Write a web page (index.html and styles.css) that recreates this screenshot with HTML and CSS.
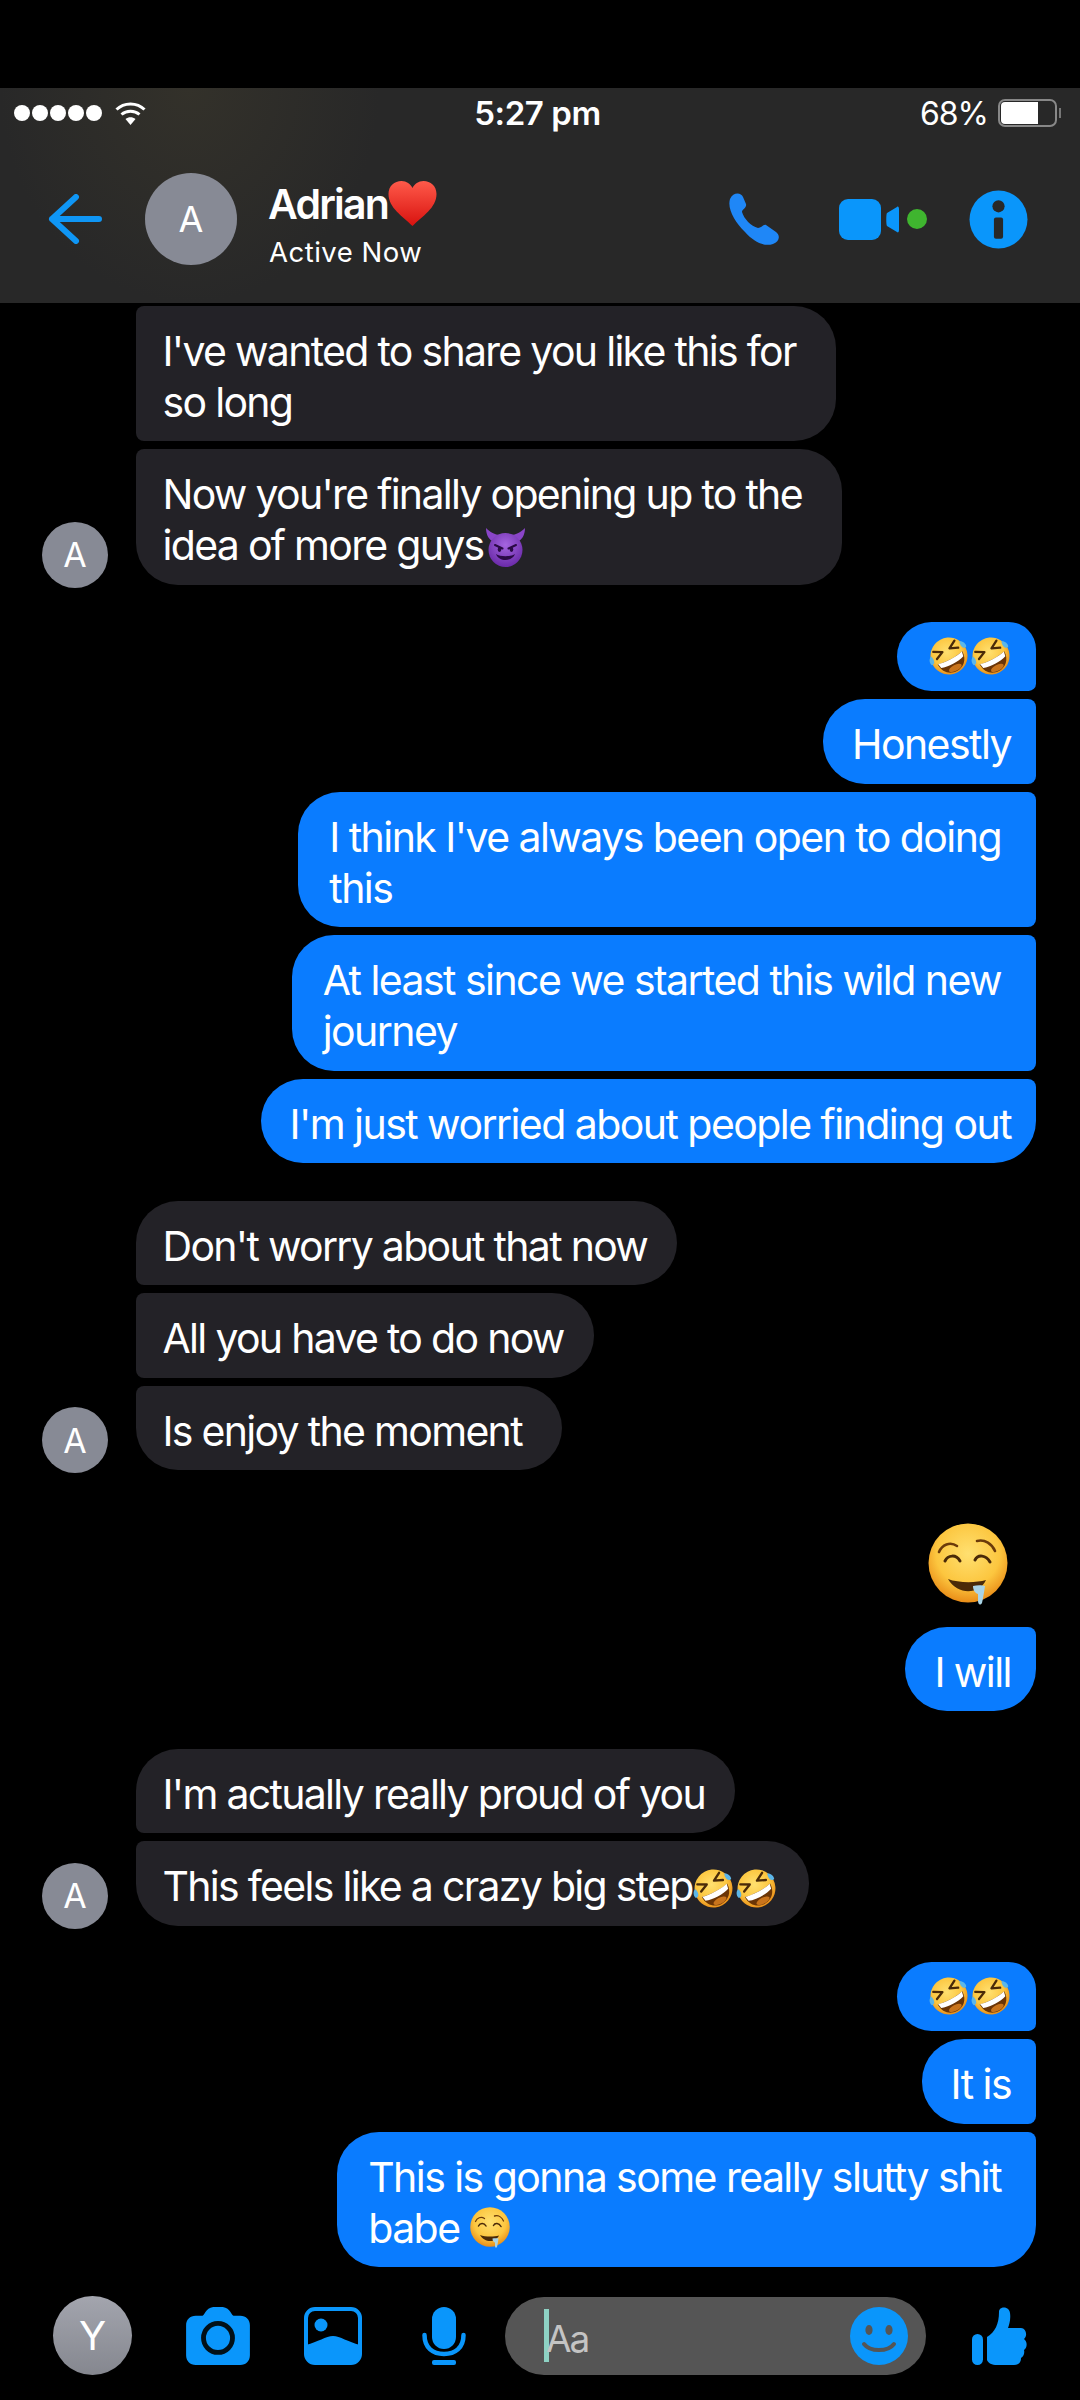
FILE: index.html
```html
<!DOCTYPE html>
<html lang="en">
<head>
    <meta charset="UTF-8">
    <meta name="viewport" content="width=device-width, initial-scale=1.0">
    <title>Adrian - Messages</title>
    <link rel="stylesheet" href="styles.css">
</head>
<body>

    <!-- shared emoji drawings -->
    <svg class="defs" width="0" height="0">
        <defs>
            <radialGradient id="faceGrad" cx="50%" cy="38%" r="62%">
                <stop offset="0%" stop-color="#ffe070"/>
                <stop offset="65%" stop-color="#fcc63f"/>
                <stop offset="100%" stop-color="#e98d18"/>
            </radialGradient>
            <radialGradient id="devilGrad" cx="50%" cy="35%" r="65%">
                <stop offset="0%" stop-color="#a565e0"/>
                <stop offset="100%" stop-color="#6a2aa8"/>
            </radialGradient>
            <linearGradient id="heartGrad" x1="0" y1="0" x2="0" y2="1">
                <stop offset="0%" stop-color="#ff5a4a"/>
                <stop offset="100%" stop-color="#d8120f"/>
            </linearGradient>
            <symbol id="rofl" viewBox="0 0 40 40">
                <g transform="rotate(-28 20 20)">
                    <circle cx="20" cy="20" r="18.5" fill="url(#faceGrad)"/>
                    <path d="M6 22 C12 24 28 24 34 22 C34 32 27 37 20 37 C13 37 6 32 6 22 Z" fill="#6b3506"/>
                    <path d="M6.5 22 C12 24 28 24 33.5 22 L32.5 27 C26 29.5 14 29.5 7.5 27 Z" fill="#fff"/>
                    <ellipse cx="20" cy="33.5" rx="7" ry="3" fill="#c9741c"/>
                    <path d="M8 9 L16 13.5 L8 17" fill="none" stroke="#4a2a08" stroke-width="2.3" stroke-linecap="round" stroke-linejoin="round"/>
                    <path d="M32 9 L24 13.5 L32 17" fill="none" stroke="#4a2a08" stroke-width="2.3" stroke-linecap="round" stroke-linejoin="round"/>
                    <path d="M36 12 C39 13 41 17 39.5 20 C37 21 34 18 36 12 Z" fill="#5cb6e8"/>
                    <path d="M4 12 C1 13 -1 17 0.5 20 C3 21 6 18 4 12 Z" fill="#5cb6e8"/>
                </g>
            </symbol>
            <symbol id="devil" viewBox="0 0 43 42">
                <path d="M2 2 C2 9 5 14 10 16 L16 9 C11 9 6 6 2 2 Z M41 2 C41 9 38 14 33 16 L27 9 C32 9 37 6 41 2 Z" fill="#8a45c8"/>
                <circle cx="21.5" cy="24" r="17" fill="url(#devilGrad)"/>
                <path d="M11 19 L18.5 22.5 M32 19 L24.5 22.5" stroke="#2a0a45" stroke-width="2" stroke-linecap="round"/>
                <ellipse cx="15.5" cy="23.5" rx="1.8" ry="2.4" fill="#2a0a45"/>
                <ellipse cx="27.5" cy="23.5" rx="1.8" ry="2.4" fill="#2a0a45"/>
                <path d="M12 28 C15 36 28 36 31 28 C27 31 16 31 12 28 Z" fill="#2a0a45"/>
            </symbol>
            <symbol id="drool" viewBox="0 0 80 84">
                <circle cx="40" cy="40" r="39.5" fill="url(#faceGrad)"/>
                <path d="M11 29 C14 22 22 18 29 23 M49 18 C57 16 64 21 67 28" fill="none" stroke="#6b3a0a" stroke-width="2.6" stroke-linecap="round"/>
                <path d="M17 38 C20 32 28 31 32 38 M47 37 C50 31 58 32 62 39" fill="none" stroke="#4a2a08" stroke-width="3" stroke-linecap="round"/>
                <path d="M20 56 C30 60 48 60 58 57 C52 71 30 73 20 56 Z" fill="#4a2a08"/>
                <path d="M45 63 C49 62 54 62 57 63 C56 69 55 76 54 80 C52 83 50 81 50 78 L50 71 C47 70 45 67 45 63 Z" fill="#a9d4e6"/>
            </symbol>
        </defs>
    </svg>

    <header class="top-bar">
        <div class="status-row">
            <div class="status-left">
                <span class="signal"><i></i><i></i><i></i><i></i><i></i></span>
                <svg class="wifi" viewBox="0 0 31 24">
                    <path d="M1.5 8.5 C9 1 22 1 29.5 8.5" fill="none" stroke="#fff" stroke-width="3"/>
                    <path d="M6.5 13.5 C11.5 9 19.5 9 24.5 13.5" fill="none" stroke="#fff" stroke-width="3"/>
                    <path d="M10.5 18 C13.5 15.5 17.5 15.5 20.5 18 L15.5 24 Z" fill="#fff"/>
                </svg>
            </div>
            <div class="status-time">5:27 pm</div>
            <div class="status-right">
                <span>68%</span>
                <span class="battery"><span class="battery-fill"></span></span>
                <span class="battery-tip"></span>
            </div>
        </div>
        <div class="nav-row">
            <svg class="back" viewBox="0 0 54 50">
                <path d="M28 3 L4 25 L28 47 M4 25 L51 25" fill="none" stroke="#0f96f5" stroke-width="6" stroke-linecap="round" stroke-linejoin="round"/>
            </svg>
            <div class="nav-avatar">A</div>
            <div class="nav-title">
                <div class="nav-name">Adrian<svg class="heart" viewBox="0 0 48 46"><path d="M24 45 C14 35 0 27 0 13 C0 5 6 0 13 0 C18 0 22 3 24 7 C26 3 30 0 35 0 C42 0 48 5 48 13 C48 27 34 35 24 45 Z" fill="url(#heartGrad)"/></svg></div>
                <div class="nav-status">Active Now</div>
            </div>
            <div class="nav-actions">
                <svg class="phone" viewBox="0 0 54 54">
                    <path d="M3 7 C6 0 14 0 16 5 L19 12 C20 16 15 17 15 20 C17 27 24 34 31 36 C35 36 36 32 39 33 L49 40 C54 44 52 50 46 52 C37 55 27 50 18 40 C8 30 0 17 3 7 Z" fill="#1f87f7"/>
                </svg>
                <svg class="video" viewBox="0 0 88 41">
                    <rect x="0" y="0" width="42" height="41" rx="9" fill="#0a96fb"/>
                    <path d="M48 14 L58 8 C59 7 60 8 60 10 L60 31 C60 33 59 34 58 33 L48 27 C47 26 47 15 48 14 Z" fill="#0a96fb"/>
                    <circle cx="78" cy="20" r="10" fill="#3fb52f"/>
                </svg>
                <svg class="info" viewBox="0 0 58 58">
                    <circle cx="29" cy="29" r="28.5" fill="#0a96fb"/>
                    <circle cx="29" cy="16" r="6" fill="#282828"/>
                    <rect x="24.5" y="27" width="9" height="21" rx="2" fill="#282828"/>
                </svg>
            </div>
        </div>
    </header>

    <main class="chat">
        <!-- Adrian -->
        <section class="group in">
            <div class="avatar">A</div>
            <div class="stack">
                <div class="bubble wide clip-top">I've wanted to share you like this for<br>so long</div>
                <div class="bubble wide last">Now you're finally opening up to the<br>idea of more guys<svg class="emoji devil"><use href="#devil"/></svg></div>
            </div>
        </section>

        <!-- me -->
        <section class="group out">
            <div class="stack">
                <div class="bubble first emoji-bubble"><svg class="emoji"><use href="#rofl"/></svg><svg class="emoji"><use href="#rofl"/></svg></div>
                <div class="bubble mid">Honestly</div>
                <div class="bubble mid wide">I think I've always been open to doing<br>this</div>
                <div class="bubble mid wide">At least since we started this wild new<br>journey</div>
                <div class="bubble last">I'm just worried about people finding out</div>
            </div>
        </section>

        <section class="group in">
            <div class="avatar">A</div>
            <div class="stack">
                <div class="bubble first">Don't worry about that now</div>
                <div class="bubble mid">All you have to do now</div>
                <div class="bubble last wide">Is enjoy the moment</div>
            </div>
        </section>

        <section class="group out solo">
            <div class="stack">
                <svg class="big-emoji"><use href="#drool"/></svg>
                <div class="bubble last">I will</div>
            </div>
        </section>

        <section class="group in">
            <div class="avatar">A</div>
            <div class="stack">
                <div class="bubble first">I'm actually really proud of you</div>
                <div class="bubble last">This feels like a crazy big step<svg class="emoji"><use href="#rofl"/></svg><svg class="emoji"><use href="#rofl"/></svg></div>
            </div>
        </section>

        <section class="group out closing">
            <div class="stack">
                <div class="bubble first emoji-bubble"><svg class="emoji"><use href="#rofl"/></svg><svg class="emoji"><use href="#rofl"/></svg></div>
                <div class="bubble mid">It is</div>
                <div class="bubble last wide">This is gonna some really slutty shit<br>babe <svg class="emoji small"><use href="#drool"/></svg></div>
            </div>
        </section>
    </main>

    <footer class="composer">
        <div class="me-avatar">Y</div>
        <svg class="camera" viewBox="0 0 66 60">
            <path d="M10 9 L17 9 C19 9 20 1 28 0 L38 0 C46 1 47 9 49 9 L56 9 C62 9 66 13 66 19 L66 50 C66 56 62 60 56 60 L10 60 C4 60 0 56 0 50 L0 19 C0 13 4 9 10 9 Z" fill="#0a96fb"/>
            <circle cx="33" cy="32" r="15" fill="#0a96fb" stroke="#021018" stroke-width="5"/>
        </svg>
        <svg class="photo" viewBox="0 0 58 58">
            <rect x="2" y="2" width="54" height="54" rx="9" fill="none" stroke="#0a96fb" stroke-width="4"/>
            <path d="M2 38 C14 35 22 29 29 29 C36 29 44 35 56 38 L56 48 C56 53 53 56 48 56 L10 56 C5 56 2 53 2 48 Z" fill="#0a96fb"/>
            <circle cx="17" cy="18" r="6.5" fill="#0a96fb"/>
        </svg>
        <svg class="mic" viewBox="0 0 44 58">
            <rect x="10" y="0" width="24" height="42" rx="12" fill="#0a96fb"/>
            <path d="M2.5 28 C2.5 41 11 47 22 47 C33 47 41.5 41 41.5 28" fill="none" stroke="#0a96fb" stroke-width="4.5" stroke-linecap="round"/>
            <rect x="10" y="53" width="24" height="5" rx="2" fill="#0a96fb"/>
        </svg>
        <div class="input-box">
            <span class="caret"></span>
            <span class="placeholder">Aa</span>
            <svg class="smile" viewBox="0 0 58 58">
                <circle cx="29" cy="29" r="29" fill="#0a96fb"/>
                <ellipse cx="19" cy="23" rx="3.6" ry="5" fill="#555"/>
                <ellipse cx="39" cy="23" rx="3.6" ry="5" fill="#555"/>
                <path d="M14 37 C20 45 38 45 44 37" fill="none" stroke="#555" stroke-width="4" stroke-linecap="round"/>
            </svg>
        </div>
        <svg class="like" viewBox="0 0 56 58">
            <rect x="0" y="27" width="11" height="31" rx="5.5" fill="#0a96fb"/>
            <path d="M15 30 C23 25 27 17 27 5 C27 -1 37 -1 38 6 C39 13 37 18 36 21 L49 21 C54 21 56 29 52 32 C56 35 55 41 52 43 C53 47 51 50 49 51 C49 56 46 58 42 58 L25 58 C20 58 16 56 15 53 Z" fill="#0a96fb"/>
        </svg>
    </footer>

</body>
</html>
```

FILE: styles.css
```css
* {
    box-sizing: border-box;
}
html, body {
    margin: 0;
    padding: 0;
}
body {
    width: 1080px;
    height: 2400px;
    overflow: hidden;
    background: #000;
    color: #fff;
    font-family: Inter, "Liberation Sans", sans-serif;
    padding-top: 88px;
}
.defs {
    position: absolute;
}

/* header */
.top-bar {
    height: 215px;
    background: radial-gradient(ellipse 190px 215px at 190px 0, #33312a, #282828);
}
.status-row {
    height: 50px;
    display: grid;
    grid-template-columns: 1fr auto 1fr;
    align-items: center;
    padding: 0 19px 0 14px;
}
.status-left {
    display: flex;
    align-items: center;
    gap: 13px;
}
.signal {
    display: flex;
    gap: 2px;
}
.signal i {
    width: 16px;
    height: 16px;
    border-radius: 50%;
    background: #fff;
}
.wifi {
    width: 31px;
    height: 24px;
}
.status-time {
    font-size: 33px;
    font-weight: 600;
    letter-spacing: -0.4px;
}
.status-right {
    display: flex;
    align-items: center;
    justify-content: flex-end;
    font-size: 32px;
    letter-spacing: -1px;
}
.battery {
    width: 59px;
    height: 28px;
    margin-left: 10px;
    border: 2px solid #888;
    border-radius: 7px;
    padding: 1px;
    display: block;
}
.battery-fill {
    display: block;
    height: 100%;
    width: 37px;
    background: #fff;
    border-radius: 4px 0 0 4px;
}
.battery-tip {
    width: 2px;
    height: 10px;
    margin-left: 2px;
    background: #777;
}
.nav-row {
    height: 162px;
    display: flex;
    align-items: center;
    padding-left: 48px;
}
.back {
    width: 54px;
    height: 50px;
}
.nav-avatar {
    width: 92px;
    height: 92px;
    margin-left: 43px;
    border-radius: 50%;
    background: #878a95;
    display: flex;
    align-items: center;
    justify-content: center;
    font-size: 36px;
}
.nav-title {
    margin-left: 31px;
    padding-top: 11px;
}
.nav-name {
    display: flex;
    align-items: center;
    font-size: 41px;
    font-weight: 600;
    letter-spacing: -1.8px;
    line-height: 50px;
}
.heart {
    width: 49px;
    height: 46px;
    margin-left: 0;
}
.nav-status {
    font-size: 27.5px;
    line-height: 36px;
    margin-top: 5px;
    padding-left: 1px;
    letter-spacing: 0.5px;
}
.nav-actions {
    margin-left: auto;
    display: flex;
    align-items: center;
    padding-right: 52px;
}
.phone {
    width: 54px;
    height: 54px;
}
.video {
    width: 88px;
    height: 41px;
    margin-left: 58px;
}
.info {
    width: 59px;
    height: 59px;
    margin-left: 42px;
}

/* messages */
.chat {
    height: 1973px;
    padding: 2.5px 44px 0 42px;
    display: flex;
    flex-direction: column;
    gap: 37.5px;
}
.group {
    display: flex;
}
.group.in {
    align-items: flex-end;
}
.group.out {
    justify-content: flex-end;
}
.avatar {
    width: 66px;
    height: 66px;
    flex: none;
    margin: 0 28px -3px 0;
    border-radius: 50%;
    background: #878a95;
    display: flex;
    align-items: center;
    justify-content: center;
    font-size: 34px;
}
.stack {
    display: flex;
    flex-direction: column;
    gap: 8px;
}
.out .stack {
    align-items: flex-end;
}
.in .stack {
    align-items: flex-start;
}
.bubble {
    padding: 20px 30px 13.5px 26.5px;
    font-size: 41px;
    line-height: 51px;
    letter-spacing: -1.7px;
    white-space: nowrap;
    border-radius: 42px;
}
.out .bubble {
    padding-left: 29px;
    padding-right: 25px;
    letter-spacing: -1.55px;
}
.bubble.wide {
    padding-right: 40px;
}
.out .bubble.wide {
    padding-left: 31px;
    padding-right: 35px;
}
.in .bubble {
    background: #232227;
    color: #fff;
}
.out .bubble {
    background: #0a7cff;
    color: #fff;
}
.in .first {
    border-bottom-left-radius: 8px;
}
.in .mid, .in .clip-top {
    border-top-left-radius: 8px;
    border-bottom-left-radius: 8px;
}
.in .last {
    border-top-left-radius: 8px;
}
.out .first {
    border-bottom-right-radius: 8px;
}
.out .mid {
    border-top-right-radius: 8px;
    border-bottom-right-radius: 8px;
}
.out .last {
    border-top-right-radius: 8px;
}
.out .bubble.emoji-bubble {
    height: 69px;
    padding: 14px 25px 0 32px;
    display: flex;
    gap: 2px;
    border-radius: 38px 30px 8px 38px;
}
.emoji {
    width: 41px;
    height: 41px;
    vertical-align: -8px;
    margin-right: 2px;
}
.emoji-bubble .emoji {
    width: 40px;
    height: 40px;
    margin-right: 0;
}
.emoji.devil {
    width: 43px;
    height: 42px;
}
.emoji.small {
    width: 40px;
    height: 42px;
    vertical-align: -6px;
}
.solo {
    margin-top: 15px;
}
.closing {
    margin-top: -1px;
}
.big-emoji {
    width: 80px;
    height: 84px;
    margin: 0 28px 12px 0;
}

/* bottom bar */
.composer {
    height: 119px;
    display: flex;
    align-items: center;
    padding-left: 53px;
}
.me-avatar {
    width: 79px;
    height: 79px;
    flex: none;
    border-radius: 50%;
    background: linear-gradient(#a3a5ae, #85878f);
    display: flex;
    align-items: center;
    justify-content: center;
    font-size: 40px;
}
.camera {
    width: 66px;
    height: 58px;
    margin-left: 53px;
}
.photo {
    width: 58px;
    height: 58px;
    margin-left: 53px;
}
.mic {
    width: 44px;
    height: 58px;
    margin-left: 60px;
}
.input-box {
    width: 421px;
    height: 78px;
    margin-left: 39px;
    background: #555;
    border-radius: 39px;
    display: flex;
    align-items: center;
    padding: 0 18px 0 39px;
}
.caret {
    width: 5px;
    height: 53px;
    background: #8ed2c4;
}
.placeholder {
    font-size: 37px;
    letter-spacing: -2px;
    color: #c4c4c4;
    margin-left: -3px;
    padding-top: 6px;
}
.smile {
    width: 58px;
    height: 58px;
    margin-left: auto;
}
.like {
    width: 56px;
    height: 58px;
    margin-left: 46px;
}
```
